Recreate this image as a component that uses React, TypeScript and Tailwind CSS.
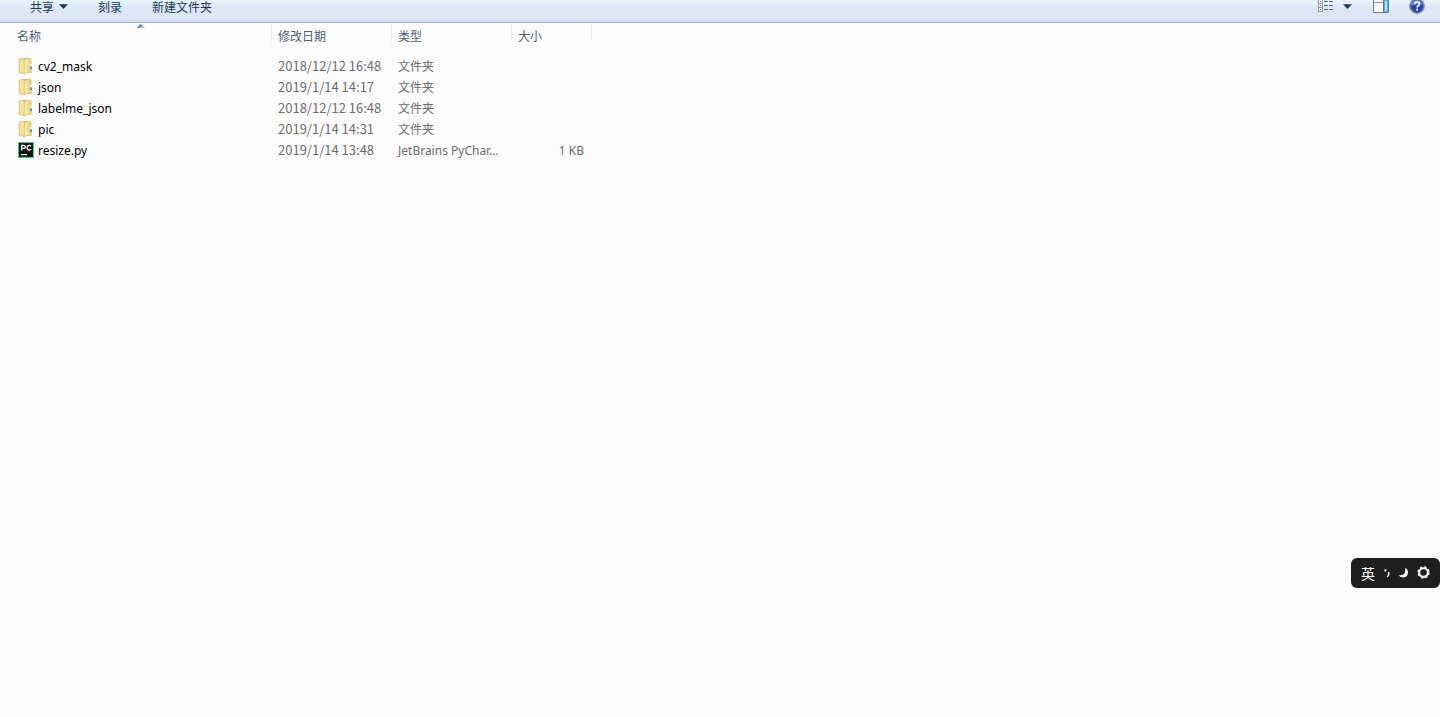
import React from "react";

type Entry = {
  name: string;
  modified: string;
  type: string;
  size?: string;
  folder: boolean;
};

const entries: Entry[] = [
  { name: "cv2_mask", modified: "2018/12/12 16:48", type: "文件夹", folder: true },
  { name: "json", modified: "2019/1/14 14:17", type: "文件夹", folder: true },
  { name: "labelme_json", modified: "2018/12/12 16:48", type: "文件夹", folder: true },
  { name: "pic", modified: "2019/1/14 14:31", type: "文件夹", folder: true },
  { name: "resize.py", modified: "2019/1/14 13:48", type: "JetBrains PyChar...", size: "1 KB", folder: false },
];

function Caret() {
  return (
    <svg width="9" height="5" viewBox="0 0 9 5" aria-hidden="true">
      <path d="M0 .3h9L4.5 5z" fill="#1e395b" />
    </svg>
  );
}

function FolderIcon() {
  return (
    <svg width="16" height="16" viewBox="0 0 16 16" className="shrink-0" aria-hidden="true">
      <defs>
        <linearGradient id="folderFront" x1="0" x2="1">
          <stop offset="0" stopColor="#f0dc88" />
          <stop offset=".5" stopColor="#f7e9a8" />
          <stop offset="1" stopColor="#e2c766" />
        </linearGradient>
        <linearGradient id="folderBack" x1="0" x2="1">
          <stop offset="0" stopColor="#d8b955" />
          <stop offset=".5" stopColor="#f3e3a0" />
          <stop offset="1" stopColor="#e3ca74" />
        </linearGradient>
      </defs>
      <path d="M5.5.5h6.8l.7.7v13.3H5.5z" fill="url(#folderBack)" stroke="#d6ba5c" strokeWidth=".7" />
      <path d="M1.2 1 5 .5l2.4 1.2v14L1.2 14.6z" fill="url(#folderFront)" stroke="#d3b654" strokeWidth=".7" />
      <path d="M7 2.2 8.4 1.4v13L7 15.4z" fill="#faf0bc" />
      <path d="M12 5h2v9.5h-2z" fill="#ead58a" />
      <path d="M12 5.5h2v3h-2z" fill="#edf3ee" />
      <path d="M12 8.5h2V11h-2z" fill="#3d9fdc" />
    </svg>
  );
}

function PyCharmIcon() {
  return (
    <svg width="16" height="16" viewBox="0 0 16 16" className="shrink-0" aria-hidden="true">
      <rect width="16" height="16" fill="#21d789" />
      <rect x="1" y="1" width="14" height="14" fill="#141414" />
      <path d="M3.7 8.5V3.4h1.8q1.8 0 1.8 1.5T5.5 6.4H4M13 4.2q-.8-.8-1.8-.8-2 0-2 2.3t2 2.3q1 0 1.8-.8" fill="none" stroke="#f2f2f2" strokeWidth="1.4" />
      <path d="M3 12h6v1.2H3z" fill="#fff" />
    </svg>
  );
}

function ViewIcon() {
  return (
    <svg width="16" height="12" viewBox="0 0 16 12" aria-hidden="true">
      {[-1, 3, 7].map((y, i) => (
        <g key={y}>
          <rect x="0.5" y={y + 0.5} width="4" height="4" fill="#fff" stroke="#8d9cad" />
          <rect x="2" y={y + 2} width="1" height="1" fill={i === 1 ? "#d0202a" : "#2468b4"} />
          <path d={`M6 ${y + 2.5}h4M11 ${y + 2.5}h4`} stroke="#5b6b80" />
        </g>
      ))}
    </svg>
  );
}

function PreviewIcon() {
  return (
    <svg width="16" height="13" viewBox="0 0 16 13" aria-hidden="true">
      <path d="M.5-1v13.5h15V-1" fill="#fff" stroke="#67829f" />
      <path d="M1 2.5h9" stroke="#8298af" />
      <path d="M10 0h5v12h-5z" fill="#56b5dc" />
      <path d="M12 1h2v10h-2z" fill="#a8def2" />
      <path d="M10.5 0v12" stroke="#55799a" />
    </svg>
  );
}

function HelpIcon() {
  return (
    <svg width="16" height="14" viewBox="0 0 16 14" aria-hidden="true">
      <circle cx="8" cy="6" r="7.2" fill="#2346b4" stroke="#8a8f9c" strokeWidth="1.4" />
      <path d="M2 6a6 6 0 0 1 12-1Q8 3 2 6z" fill="#5b7bd4" />
      <path d="M5.6 4.3Q5.6 2 8 2t2.4 2.1Q10.4 5.3 9 6q-.9.5-.9 1.6" fill="none" stroke="#fff" strokeWidth="1.7" />
      <rect x="7.2" y="8.7" width="1.8" height="1.8" fill="#fff" />
    </svg>
  );
}

function Toolbar() {
  return (
    <header className="flex h-[23px] items-start justify-between border-b border-[#a0afc3] bg-[linear-gradient(#e8f4fb_0px,#e3eef9_5px,#dce6f4_7px,#dce6f4_18px,#d9e5f4_20px,#cfdeef_22px)] pr-[15px] pl-[30px] text-[12px] leading-[13px] text-[#1e395b]">
      <nav className="flex">
        <button className="mr-[30px] flex items-center gap-[5px]">
          共享
          <Caret />
        </button>
        <button className="mr-[30px]">刻录</button>
        <button>新建文件夹</button>
      </nav>
      <div className="flex items-start">
        <button aria-label="更改视图"><ViewIcon /></button>
        <button aria-label="更多选项" className="ml-[9px] flex h-3 items-center"><Caret /></button>
        <button aria-label="显示预览窗格" className="ml-[21px]"><PreviewIcon /></button>
        <button aria-label="获取帮助" className="ml-5"><HelpIcon /></button>
      </div>
    </header>
  );
}

const headCell =
  "h-[23px] bg-[linear-gradient(#d9e6f3,#e6eff8_60%,#fcfcfc)] bg-[length:1px_100%] bg-right bg-no-repeat px-0 pt-1 pb-0 text-left align-top text-[12px] leading-[18px] font-normal text-[#4c607a]";

function FileTable() {
  return (
    <table className="w-[592px] table-fixed border-collapse">
      <colgroup>
        <col className="w-[272px]" />
        <col className="w-[120px]" />
        <col className="w-[120px]" />
        <col className="w-[80px]" />
      </colgroup>
      <thead>
        <tr>
          <th className={`${headCell} relative`}>
            <svg width="8" height="4" viewBox="0 0 8 4" className="absolute top-px left-[137px]" aria-hidden="true">
              <path d="M0 4 4 0l4 4z" fill="#8ccbe0" />
              <path d="M0 4 4 0l1 1-3 3z" fill="#3d6f91" />
            </svg>
            <span className="pl-[17px]">名称</span>
          </th>
          <th className={headCell}><span className="pl-[6px]">修改日期</span></th>
          <th className={headCell}><span className="pl-[6px]">类型</span></th>
          <th className={headCell}><span className="pl-[6px]">大小</span></th>
        </tr>
      </thead>
      <tbody className="text-[#6d6d6d] before:block before:h-[10px] before:content-['']">
        {entries.map((e) => (
          <tr key={e.name} className="h-[21px] font-['Noto_Sans','Noto_Sans_CJK_SC',sans-serif] text-[12px] leading-[21px]">
            <td className="p-0 pl-[18px] align-top">
              <span className="flex items-start gap-1 pt-[2px] leading-[17px] text-black">
                {e.folder ? <FolderIcon /> : <PyCharmIcon />}
                {e.name}
              </span>
            </td>
            <td className="p-0 pl-[6px] align-top font-['Noto_Sans_CJK_SC',sans-serif] text-[13px] leading-[19px]">{e.modified}</td>
            <td className="p-0 pl-[6px] whitespace-nowrap">{e.type}</td>
            <td className="p-0 pr-2 text-right">{e.size}</td>
          </tr>
        ))}
      </tbody>
    </table>
  );
}

function InputBar() {
  return (
    <div className="fixed top-[558px] right-0 flex h-[30px] items-center rounded-md bg-[#1f1f1f] px-[10px] pb-px text-white">
      <button className="text-[14px] leading-5">英</button>
      <button aria-label="标点" className="ml-[9px]">
        <svg width="6" height="10" viewBox="0 0 6 10" aria-hidden="true">
          <rect x=".4" y="1.4" width="2" height="2" fill="#fff" />
          <path d="M4.8 4v1.6Q4.6 8 3.2 9" stroke="#fff" strokeWidth="1.4" fill="none" />
        </svg>
      </button>
      <button aria-label="半角" className="ml-2">
        <svg width="11" height="11" viewBox="0 0 11 11" aria-hidden="true">
          <path d="M7 .8q3.4 1.8 3 5.4Q9 10.6 5 10.6 1.8 10.4.4 8 5 9 6.8 6 8 3.6 7 .8z" fill="#fff" />
        </svg>
      </button>
      <button aria-label="设置" className="ml-2">
        <svg width="13" height="13" viewBox="0 0 13 13" aria-hidden="true">
          <circle cx="6.5" cy="6.5" r="4.3" fill="none" stroke="#fff" strokeWidth="2" />
          <circle cx="6.5" cy="6.5" r="5.5" fill="none" stroke="#fff" strokeWidth="1.4" strokeDasharray="2.4 1.92" />
        </svg>
      </button>
    </div>
  );
}

export default function App() {
  return (
    <div className="min-h-screen bg-[#fcfcfc] font-['Noto_Sans_CJK_SC',sans-serif]">
      <Toolbar />
      <main>
        <FileTable />
      </main>
      <InputBar />
    </div>
  );
}
